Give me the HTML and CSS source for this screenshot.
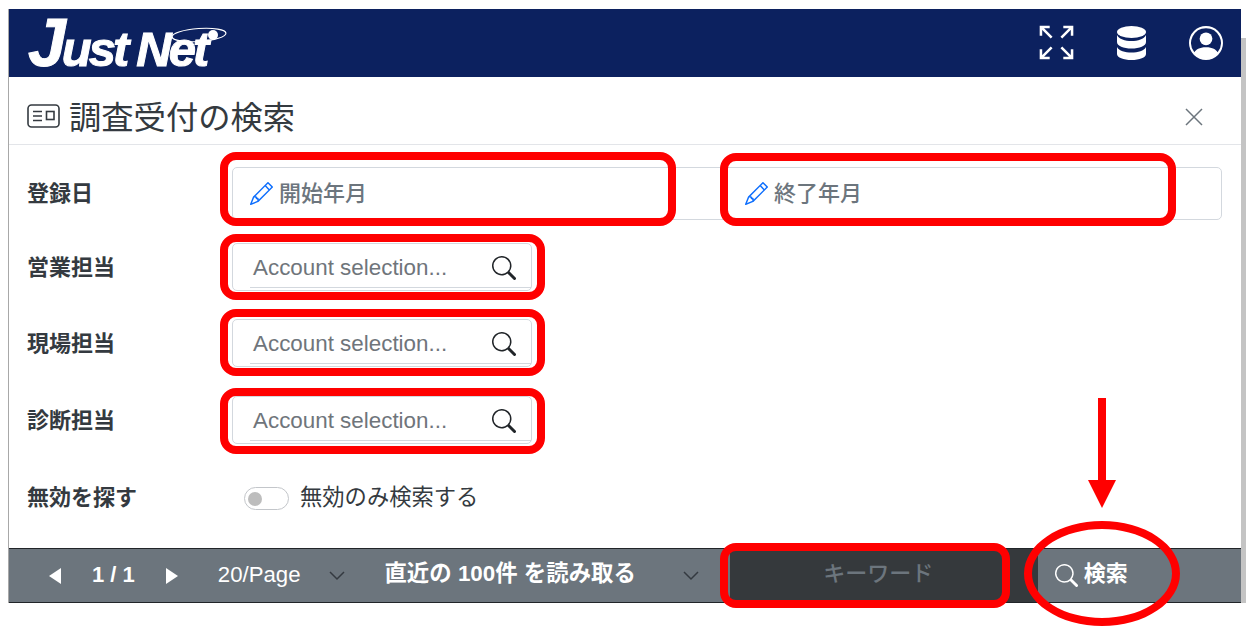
FILE: index.html
```html
<!DOCTYPE html>
<html lang="ja">
<head>
<meta charset="utf-8">
<title>調査受付の検索</title>
<link rel="stylesheet" href="styles.css">
</head>
<body>
<div class="window">
  <div class="app">
    <header class="topbar">
      <div class="logo"><span class="logo-j">J</span><span>ust</span><span class="logo-net">Net</span><svg class="logo-orbit" viewBox="0 0 60 24"><ellipse cx="29" cy="12" rx="27" ry="6.5" transform="rotate(-4 29 12)" fill="none" stroke="#fff" stroke-width="1.2"/><circle cx="43" cy="12" r="5" fill="#fff"/></svg></div>
      <div class="top-icons">
        <svg class="icon-expand" viewBox="0 0 36 36" fill="none" stroke="#fff" stroke-width="2.6"><path d="M2 11V2h9M2 2l11 11M25 2h9v9M34 2 23 13M2 25v9h9M2 34l11-11M25 34h9v-9M34 34 23 23"/></svg>
        <svg class="icon-db" viewBox="0 0 29 34" fill="#fff"><ellipse cx="14.5" cy="6" rx="14.5" ry="6"/><path d="M0 9c2 4 8 6 14.5 6S27 13 29 9v7c0 4-6.500 6.500-14.500 6.500S0 20 0 16z"/><path d="M0 21c2 4 8 5.500 14.500 5.500S27 25 29 21v7c0 3.500-6.500 6-14.500 6S0 31.500 0 28z"/></svg>
        <svg class="icon-user" viewBox="0 0 16 16" fill="#fff"><path d="M11 6a3 3 0 1 1-6 0 3 3 0 0 1 6 0z"/><path fill-rule="evenodd" d="M0 8a8 8 0 1 1 16 0A8 8 0 0 1 0 8zm8-7a7 7 0 0 0-5.468 11.370C3.242 11.226 4.805 10 8 10s4.757 1.225 5.468 2.370A7 7 0 0 0 8 1z"/></svg>
      </div>
    </header>

    <div class="title-row">
      <svg class="icon-card" viewBox="0 0 33 24" fill="none" stroke="#343a40" stroke-width="1.600"><rect x="1" y="1" width="31" height="22" rx="3.500"/><path d="M6 7.500h9M6 12h9M6 16.500h9"/><rect x="19.500" y="7.500" width="7.500" height="8"/></svg>
      <h1 class="title">調査受付の検索</h1>
      <svg class="icon-close" viewBox="0 0 18 18" fill="none" stroke="#6c757d" stroke-width="1.500"><path d="M1 1l16 16M17 1 1 17"/></svg>
    </div>

    <div class="form">
      <div class="row row-date">
        <div class="label label-date">登録日</div>
        <div class="date-box">
          <div class="date-cell">
            <svg class="icon-pencil" viewBox="0 0 16 16" fill="#0d6efd"><path d="M12.146.146a.5.5 0 0 1 .708 0l3 3a.5.5 0 0 1 0 .708l-10 10a.5.5 0 0 1-.168.11l-5 2a.5.5 0 0 1-.65-.65l2-5a.5.5 0 0 1 .11-.168l10-10zM11.207 2.500 13.500 4.793 14.793 3.500 12.500 1.207 11.207 2.500zm1.586 3L10.500 3.207 4 9.707V10h.5a.5.5 0 0 1 .5.5v.5h.5a.5.5 0 0 1 .5.5v.5h.293l6.500-6.500zm-9.761 5.175-.106.106-1.528 3.821 3.821-1.528.106-.106A.5.5 0 0 1 5 12.500V12h-.5a.5.5 0 0 1-.5-.5V11h-.5a.5.5 0 0 1-.468-.325z"/></svg>
            <span class="date-text">開始年月</span>
          </div>
          <div class="date-cell">
            <svg class="icon-pencil" viewBox="0 0 16 16" fill="#0d6efd"><path d="M12.146.146a.5.5 0 0 1 .708 0l3 3a.5.5 0 0 1 0 .708l-10 10a.5.5 0 0 1-.168.11l-5 2a.5.5 0 0 1-.65-.65l2-5a.5.5 0 0 1 .11-.168l10-10zM11.207 2.500 13.500 4.793 14.793 3.500 12.500 1.207 11.207 2.500zm1.586 3L10.500 3.207 4 9.707V10h.5a.5.5 0 0 1 .5.5v.5h.5a.5.5 0 0 1 .5.5v.5h.293l6.500-6.500zm-9.761 5.175-.106.106-1.528 3.821 3.821-1.528.106-.106A.5.5 0 0 1 5 12.500V12h-.5a.5.5 0 0 1-.5-.5V11h-.5a.5.5 0 0 1-.468-.325z"/></svg>
            <span class="date-text">終了年月</span>
          </div>
        </div>
      </div>

      <div class="row row-account">
        <div class="label">営業担当</div>
        <div class="account-box">
          <div class="account-input"><span class="placeholder">Account selection...</span>
            <svg class="icon-search" viewBox="0 0 16 16" fill="#212529"><path d="M11.742 10.344a6.500 6.500 0 1 0-1.397 1.398h-.001c.03.04.062.078.098.115l3.850 3.850a1 1 0 0 0 1.415-1.414l-3.850-3.850a1.007 1.007 0 0 0-.115-.1zM12 6.500a5.500 5.500 0 1 1-11 0 5.500 5.500 0 0 1 11 0z"/></svg>
          </div>
        </div>
      </div>
      <div class="row row-account row-third">
        <div class="label">現場担当</div>
        <div class="account-box">
          <div class="account-input"><span class="placeholder">Account selection...</span>
            <svg class="icon-search" viewBox="0 0 16 16" fill="#212529"><path d="M11.742 10.344a6.500 6.500 0 1 0-1.397 1.398h-.001c.03.04.062.078.098.115l3.850 3.850a1 1 0 0 0 1.415-1.414l-3.850-3.850a1.007 1.007 0 0 0-.115-.1zM12 6.500a5.500 5.500 0 1 1-11 0 5.500 5.500 0 0 1 11 0z"/></svg>
          </div>
        </div>
      </div>
      <div class="row row-account row-fourth">
        <div class="label">診断担当</div>
        <div class="account-box">
          <div class="account-input"><span class="placeholder">Account selection...</span>
            <svg class="icon-search" viewBox="0 0 16 16" fill="#212529"><path d="M11.742 10.344a6.500 6.500 0 1 0-1.397 1.398h-.001c.03.04.062.078.098.115l3.850 3.850a1 1 0 0 0 1.415-1.414l-3.850-3.850a1.007 1.007 0 0 0-.115-.1zM12 6.500a5.500 5.500 0 1 1-11 0 5.500 5.500 0 0 1 11 0z"/></svg>
          </div>
        </div>
      </div>

      <div class="row row-switch">
        <div class="label label-switch">無効を探す</div>
        <div class="switch"><span class="knob"></span></div>
        <span class="switch-label">無効のみ検索する</span>
      </div>
    </div>

    <footer class="footer">
      <svg class="caret" viewBox="0 0 12 16" fill="#fff"><path d="M12 0v16L0 8z"/></svg>
      <span class="pages">1 / 1</span>
      <svg class="caret caret-next" viewBox="0 0 12 16" fill="#fff"><path d="M0 0v16l12-8z"/></svg>
      <span class="per-page">20/Page</span>
      <svg class="chevron chevron-one" viewBox="0 0 16 10" fill="none" stroke="#343a40" stroke-width="1.500"><path d="M1 1l7 7 7-7"/></svg>
      <span class="recent">直近の 100件 を読み取る</span>
      <svg class="chevron chevron-two" viewBox="0 0 16 10" fill="none" stroke="#343a40" stroke-width="1.500"><path d="M1 1l7 7 7-7"/></svg>
      <div class="keyword">キーワード</div>
      <div class="search-btn">
        <svg class="icon-search-white" viewBox="0 0 16 16" fill="#fff"><path d="M11.742 10.344a6.500 6.500 0 1 0-1.397 1.398h-.001c.03.04.062.078.098.115l3.850 3.850a1 1 0 0 0 1.415-1.414l-3.850-3.850a1.007 1.007 0 0 0-.115-.1zM12 6.500a5.500 5.500 0 1 1-11 0 5.500 5.500 0 0 1 11 0z"/></svg>
        <span class="search-text">検索</span>
      </div>
    </footer>
  </div>
  <div class="scrollbar"></div>
</div>

<div class="mark mark-start"></div>
<div class="mark mark-end"></div>
<div class="mark mark-sales"></div>
<div class="mark mark-site"></div>
<div class="mark mark-diag"></div>
<div class="mark mark-keyword"></div>
<div class="mark-ellipse"></div>
<svg class="mark-arrow" viewBox="0 0 28 110" fill="#f00"><path d="M10 0h8v82h10l-14 28L0 82h10z"/></svg>
</body>
</html>
```
FILE: styles.css
```css
* { box-sizing: border-box; }
html, body { margin: 0; height: 100%; background: #fff; overflow: hidden; }
body {
  position: relative;
  font-family: "Liberation Sans", "Noto Sans CJK JP", sans-serif;
  color: #212529;
}
.window { display: flex; padding: 9px 0 0 8px; }
.app {
  width: 1233px;
  height: 594px;
  border-left: 1px solid #a8a8a8;
  display: flex;
  flex-direction: column;
}
.scrollbar { width: 5px; height: 565px; margin: 29px 0 0 0; background: #c4c4c4; }

/* top bar */
.topbar {
  height: 68px;
  flex: none;
  background: #0c215f;
  display: flex;
  align-items: center;
  justify-content: space-between;
  padding: 0 18px 0 19px;
}
.logo {
  position: relative;
  display: flex;
  align-items: baseline;
  height: 68px;
  color: #fff;
  font: italic 700 49px/67px "Liberation Sans", sans-serif;
  letter-spacing: -3px;
  white-space: nowrap;
  -webkit-text-stroke: 1px #fff;
}
.logo-j { font-size: 68px; letter-spacing: -4px; }
.logo-net { margin-left: 10px; }
.logo-orbit { position: absolute; left: 142px; top: 14px; width: 60px; height: 24px; }
.top-icons { display: flex; align-items: center; }
.icon-expand { width: 35px; height: 35px; margin: -1px 43px 0 0; }
.icon-db { width: 29px; height: 34px; margin-right: 43px; }
.icon-user { width: 34px; height: 34px; }

/* title */
.title-row {
  height: 68px;
  flex: none;
  display: flex;
  align-items: center;
  border-bottom: 1px solid #e3e5e9;
  padding: 7px 38px 0 18px;
}
.icon-card { width: 33px; height: 24px; margin: 4px 9px 0 0; }
.title {
  flex: 1;
  margin: 0;
  padding-top: 3px;
  font: 400 32.3px/1 "Noto Sans CJK JP", sans-serif;
  color: #343a40;
}
.icon-close { width: 18px; height: 18px; margin-top: 6px; }

/* form */
.form { flex: 1; display: flex; flex-direction: column; padding: 22px 19px 0 18px; }
.row { display: flex; align-items: center; }
.label {
  width: 205px;
  flex: none;
  padding-bottom: 4px;
  font: 700 22px/1 "Noto Sans CJK JP", sans-serif;
  color: #343a40;
}
.label-date { padding-bottom: 6px; }
.label-switch { padding-bottom: 6px; }
.date-box {
  width: 990px;
  height: 53px;
  display: flex;
  border: 1px solid #d3d8de;
  border-radius: 5px;
}
.date-cell {
  width: 495px;
  flex: none;
  display: flex;
  align-items: center;
  padding-left: 17px;
  font: 500 22px/1 "Noto Sans CJK JP", sans-serif;
  color: #6c757d;
}
.date-text { padding-bottom: 6px; }
.icon-pencil { width: 23px; height: 23px; margin-right: 6px; }
.row-account { margin-top: 23px; }
.row-third { margin-top: 28px; }
.row-fourth { margin-top: 29px; }
.account-box {
  width: 300px;
  height: 48px;
  padding: 0 0 3px 17px;
  border: 1px solid #d3d8de;
  border-radius: 5px;
}
.account-input {
  height: 44px;
  display: flex;
  align-items: center;
  justify-content: space-between;
  border-bottom: 1px solid #d3d8de;
  padding: 4px 15px 0 3px;
}
.placeholder { font-size: 22.4px; color: #6f757b; }
.icon-search { width: 24px; height: 24px; }
.row-switch { margin-top: 40px; }
.switch {
  width: 45px;
  height: 23px;
  margin-left: 12px;
  padding: 4px 0 0 3px;
  border: 1px solid #c3c6ca;
  border-radius: 12px;
}
.knob { display: block; width: 14px; height: 14px; border-radius: 50%; background: #bdbdbd; }
.switch-label { margin-left: 11px; padding-bottom: 6px; font: 400 22.3px/1 "Noto Sans CJK JP", sans-serif; color: #343a40; }

/* footer */
.footer {
  height: 55px;
  flex: none;
  display: flex;
  align-items: center;
  padding-left: 40px;
  background: #6c757d;
  border-top: 1px solid #212529;
  border-bottom: 1px solid #212529;
  color: #fff;
  font-size: 22px;
  white-space: nowrap;
}
.caret { width: 12px; height: 16px; }
.pages { margin-left: 31px; padding-bottom: 2px; font-weight: 700; }
.caret-next { margin-left: 31px; }
.per-page { margin-left: 40px; padding-bottom: 2px; font-size: 22.2px; }
.chevron { width: 16px; height: 10px; }
.chevron-one { margin-left: 29px; }
.recent { margin-left: 39px; padding-bottom: 10px; font-weight: 700; font-size: 22.4px; }
.chevron-two { margin-left: 47px; }
.keyword {
  width: 308px;
  height: 100%;
  margin-left: 31px;
  padding: 0 11px 9px 0;
  display: flex;
  align-items: center;
  justify-content: center;
  background: #35393c;
  color: #6c757d;
  font-family: "Noto Sans CJK JP", sans-serif;
  font-weight: 500;
  font-size: 22px;
}
.search-btn {
  display: flex;
  align-items: center;
  margin-left: 17px;
  font: 700 22px/1 "Noto Sans CJK JP", sans-serif;
}
.search-text { padding-bottom: 9px; }
.icon-search-white { width: 23px; height: 23px; margin-right: 6px; }

/* red annotations drawn on top of the screenshot */
.mark { position: absolute; border: 8px solid #f00; border-radius: 16px; }
.mark-start { left: 220px; top: 152px; width: 456px; height: 74px; }
.mark-end { left: 720px; top: 153px; width: 456px; height: 73px; }
.mark-sales { left: 220px; top: 234px; width: 325px; height: 66px; }
.mark-site { left: 220px; top: 309px; width: 325px; height: 67px; }
.mark-diag { left: 220px; top: 388px; width: 325px; height: 66px; }
.mark-keyword { left: 720px; top: 543px; width: 290px; height: 65px; }
.mark-ellipse {
  position: absolute;
  left: 1024px;
  top: 521px;
  width: 156px;
  height: 105px;
  border: 8px solid #f00;
  border-radius: 50%;
}
.mark-arrow { position: absolute; left: 1088px; top: 398px; width: 28px; height: 110px; }
```
